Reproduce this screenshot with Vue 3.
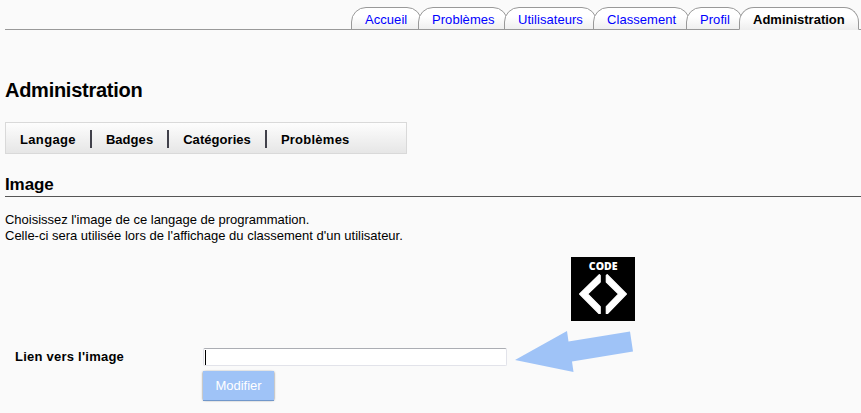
<script setup>
import { ref } from 'vue'

const tabs = [
  { label: 'Accueil', width: 67 },
  { label: 'Problèmes', width: 86 },
  { label: 'Utilisateurs', width: 89 },
  { label: 'Classement', width: 93 },
  { label: 'Profil', width: 53 },
  { label: 'Administration', width: 116, active: true },
]
const sections = [
  { label: 'Langage', spacing: 0.35 },
  { label: 'Badges', spacing: 0.05 },
  { label: 'Catégories', spacing: 0.05 },
  { label: 'Problèmes', spacing: 0.25 },
]
const link = ref('')
</script>

<template>
  <div class="page">
    <nav class="tabs">
      <a
        v-for="tab in tabs"
        :key="tab.label"
        class="tab"
        :class="{ active: tab.active }"
        :style="{ width: tab.width + 4 + 'px' }"
      >{{ tab.label }}</a>
    </nav>

    <h1>Administration</h1>

    <ul class="menu">
      <li v-for="s in sections" :key="s.label">
        <span :style="{ letterSpacing: s.spacing + 'px' }">{{ s.label }}</span>
      </li>
    </ul>

    <h2>Image</h2>
    <p class="intro">
      <span class="line first">Choisissez l'image de ce langage de programmation.</span>
      <span class="line">Celle-ci sera utilisée lors de l'affichage du classement d'un utilisateur.</span>
    </p>

    <svg class="logo" width="64" height="64" viewBox="0 0 64 64">
      <rect width="64" height="64" fill="#000" />
      <text x="32.2" y="13" text-anchor="middle" textLength="28.8" lengthAdjust="spacingAndGlyphs" class="logo-text">CODE</text>
      <g fill="#fff" stroke="#fff" stroke-width="1.2" stroke-linejoin="round">
        <path d="M28.3 17.6 L29.2 18.5 V25 L16.6 37 L29.2 49.6 V56.5 H28 L8.6 37 Z" />
        <path d="M36.2 17.6 L35.3 18.5 V25 L47.6 37 L35.3 49.6 V56.5 H36.5 L55.4 37 Z" />
      </g>
    </svg>

    <form class="form" @submit.prevent>
      <label for="link">Lien vers l'image</label>
      <div class="field">
        <div class="box">
          <span class="caret"></span>
          <input id="link" v-model="link" type="text" />
        </div>
        <button type="submit">Modifier</button>
      </div>
      <svg class="arrow" width="120" height="43" viewBox="0 0 120 43">
        <path d="M0 30 L52 1 L53.5 11.5 L115 1.5 L118 21.5 L57 31.5 L58.5 42 Z" fill="#9fc3f7" />
      </svg>
    </form>
  </div>
</template>

<style>
body {
  background: #fafafa;
}
</style>

<style scoped>
.page {
  height: 413px;
  overflow: hidden;
  box-sizing: border-box;
  padding-left: 5px;
  font-family: "Liberation Sans", Arial, sans-serif;
  font-size: 13px;
  color: #000;
  background: #fafafa;
}
.tabs {
  display: flex;
  height: 30px;
  box-sizing: border-box;
  padding: 7px 0 0 346px;
  background: linear-gradient(#999, #999) bottom / 100% 1px no-repeat;
}
.tab {
  flex: none;
  box-sizing: border-box;
  height: 23px;
  margin-right: -4px;
  padding-left: 13px;
  border: 1px solid #999;
  border-radius: 15px 15px 0 0;
  background: linear-gradient(#fff 0, #fff 40%, #efefef 100%);
  letter-spacing: 0.05px;
  line-height: 23px;
  white-space: nowrap;
  color: #0000ff;
}
.tab.active {
  color: #000;
  font-weight: bold;
  letter-spacing: 0;
  border-bottom-color: #eee;
}
h1 {
  margin: 48px 0 0;
  font-size: 20px;
  line-height: 24px;
  letter-spacing: -0.27px;
}
.menu {
  display: flex;
  align-items: center;
  width: 402px;
  height: 32px;
  box-sizing: border-box;
  margin: 20px 0 0;
  padding: 0;
  border: 1px solid #d9d9d9;
  background: linear-gradient(#fdfdfd, #e6e6e6);
  list-style: none;
  font-weight: bold;
}
.menu li {
  height: 18px;
  padding: 1px 14px 0;
  box-sizing: border-box;
  margin-top: 2px;
  line-height: 18px;
}
.menu li + li {
  border-left: 2px solid #41414b;
}
h2 {
  margin: 20px 0 0;
  height: 22px;
  border-bottom: 1px solid #555;
  font-size: 17px;
  line-height: 21px;
  letter-spacing: -0.1px;
}
.intro {
  margin: 15px 0 0;
  line-height: 16px;
}
.line {
  display: block;
}
.line.first {
  letter-spacing: -0.02px;
}
.logo {
  display: block;
  margin: 13px 0 0 566px;
}
.logo-text {
  font: 800 10px "Open Sans", sans-serif;
  fill: #fff;
}
.form {
  display: flex;
  align-items: flex-start;
  height: 84px;
  margin-top: 8px;
}
label {
  width: 178px;
  margin: 20px 0 0 10px;
  line-height: 16px;
  font-weight: bold;
  letter-spacing: 0.24px;
}
.field {
  width: 317px;
  padding-top: 19px;
}
.box {
  display: flex;
  width: 304px;
  height: 18px;
  margin-left: 10px;
  box-sizing: border-box;
  border: 1px solid #e2e3ea;
  border-top-color: #abadb3;
  border-radius: 2px;
  background: #fff;
}
.caret {
  width: 1px;
  height: 15px;
  margin: 1px 0 0 1px;
  background: #000;
}
input {
  flex: 1;
  min-width: 0;
  padding: 0;
  border: 0;
  outline: 0;
  background: transparent;
  font: inherit;
}
button {
  display: block;
  width: 71px;
  height: 30px;
  margin: 5px 0 0 10px;
  padding: 0;
  border: 0;
  border-bottom: 1px solid #7197ca;
  background: #9fc3f7;
  box-shadow: 1px 0 2px -1px rgba(0, 0, 0, 0.6), -1px 0 2px -1px rgba(0, 0, 0, 0.6);
  color: #fff;
  font: 13px "Liberation Sans", Arial, sans-serif;
  line-height: 28px;
}
.arrow {
  margin: 1px 0 0 5px;
}
</style>
